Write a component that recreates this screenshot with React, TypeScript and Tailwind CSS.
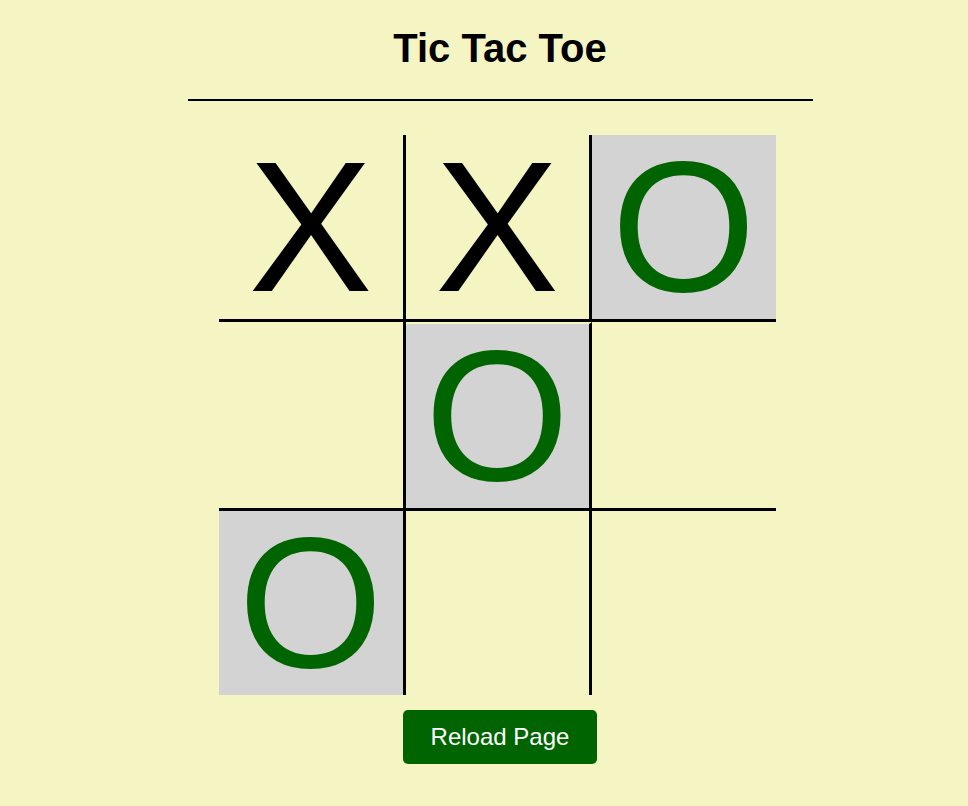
import React from "react";

type Cell = { v: "X" | "O" | ""; win?: boolean };

const cells: Cell[] = [
  { v: "X" },
  { v: "X" },
  { v: "O", win: true },
  { v: "" },
  { v: "O", win: true },
  { v: "" },
  { v: "O", win: true },
  { v: "" },
  { v: "" },
];

const cellClass = [
  "border-r-[3px] border-b-[3px] border-black",
  "border-r-[3px] border-b-[3px] border-black",
  "border-b-[3px] border-black",
  "border-r-[3px] border-b-[3px] border-black",
  "border-r-[3px] border-b-[3px] border-black border-t-[2px] border-t-[#f5f5c4]",
  "border-b-[3px] border-black",
  "border-r-[3px] border-black",
  "border-r-[3px] border-black",
  "",
];

export default function App() {
  return (
    <div
      className="min-h-screen bg-[#f5f5c4] flex justify-center pl-[32px]"
      style={{ fontFamily: '"Liberation Sans", Arial, sans-serif' }}
    >
      <div className="w-[625px] flex flex-col">
        <h1 className="mt-[28px] text-[40px] font-bold leading-none text-center text-black">
          Tic Tac Toe
        </h1>
        <div className="mt-[31px] h-[2px] bg-black" />
        <div className="mt-[34px] ml-[31px] grid grid-cols-[187px_186px_184px] grid-rows-[187px_189px_184px]">
          {cells.map((c, i) => (
            <div
              key={i}
              className={`${cellClass[i]} flex items-center justify-center text-[186px] leading-none ${
                c.win ? "bg-[#d3d3d3] text-[#006400]" : "text-black"
              }`}
            >
              {c.v}
            </div>
          ))}
        </div>
        <button className="mt-[15px] self-center w-[194px] h-[54px] rounded-[5px] bg-[#006400] text-white text-[24px] leading-none">
          Reload Page
        </button>
      </div>
    </div>
  );
}
